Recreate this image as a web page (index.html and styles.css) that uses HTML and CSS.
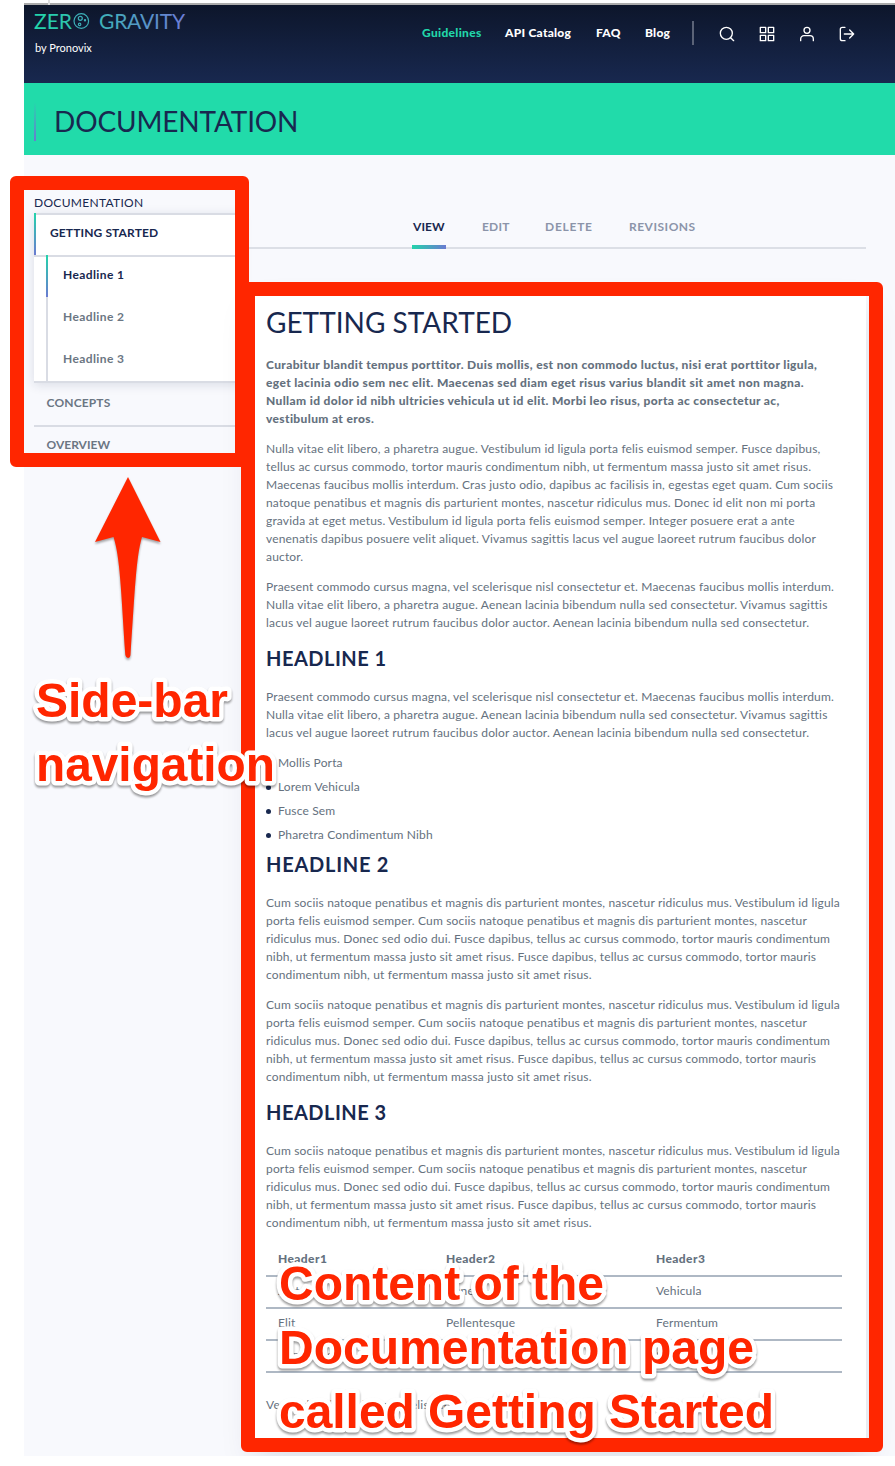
FILE: index.html
```html
<!DOCTYPE html>
<html lang="en">
<head>
<meta charset="utf-8">
<title>Documentation</title>
<link rel="stylesheet" href="styles.css">
</head>
<body>
<div class="tick"></div>
<div class="page">
  <header class="topbar">
    <div class="brand">
      <svg class="logo" width="160" height="22" viewBox="0 0 160 22">
        <defs><linearGradient id="brand" gradientUnits="userSpaceOnUse" x1="0" y1="0" x2="152" y2="0"><stop offset="0" stop-color="#21d6aa"/><stop offset=".3" stop-color="#33bfb0"/><stop offset="1" stop-color="#6e7bd8"/></linearGradient></defs>
        <g fill="url(#brand)" class="logo-text">
          <text x="0" y="17" textLength="38">ZER</text>
          <text x="65" y="17" textLength="86">GRAVITY</text>
        </g>
        <g fill="none" stroke="#3db0b8" stroke-width="1.2"><circle cx="47.3" cy="9" r="7.3"/><circle cx="46.3" cy="6.300" r="2"/><circle cx="45.6" cy="12.4" r="1.2"/><circle cx="51" cy="8.200" r=".6"/></g>
      </svg>
      <div class="by">by Pronovix</div>
    </div>
    <nav class="menu">
      <a class="active guide">Guidelines</a><a class="api">API Catalog</a><a class="faq">FAQ</a><a class="blog">Blog</a>
    </nav>
    <div class="divider"></div>
    <div class="icons">
      <svg viewBox="0 0 24 24"><circle cx="11" cy="11" r="9"/><path d="M17.5 17.5 22 22"/></svg>
      <svg viewBox="0 0 24 24"><path d="M2 2h8v8H2zM14 2h8v8h-8zM2 14h8v8H2zM14 14h8v8h-8z"/></svg>
      <svg viewBox="0 0 24 24"><circle cx="12" cy="6.5" r="4.5"/><path d="M2.5 22v-2.500a5 5 0 0 1 5-5h9a5 5 0 0 1 5 5V22"/></svg>
      <svg viewBox="0 0 24 24"><path d="M9 2H5a3 3 0 0 0-3 3v14a3 3 0 0 0 3 3h4M8 12h14M16 6l6 6-6 6"/></svg>
    </div>
  </header>
  <div class="banner"><h1>DOCUMENTATION</h1></div>
  <div class="body">
    <aside class="sidebar">
      <div class="side-title">DOCUMENTATION</div>
      <div class="open">
        <div class="current"><span>GETTING STARTED</span></div>
        <div class="subs">
          <div class="sub on">Headline 1</div>
          <div class="sub">Headline 2</div>
          <div class="sub">Headline 3</div>
        </div>
      </div>
      <div class="item"><span>CONCEPTS</span></div>
      <div class="item last"><span>OVERVIEW</span></div>
    </aside>
    <main class="main">
      <nav class="tabs"><a class="sel">VIEW</a><a class="t-edit">EDIT</a><a class="t-delete">DELETE</a><a class="t-rev">REVISIONS</a></nav>
      <article class="panel">
        <h2>GETTING STARTED</h2>
        <p class="lead">Curabitur blandit tempus porttitor. Duis mollis, est non commodo luctus, nisi erat porttitor ligula,<br>eget lacinia odio sem nec elit. Maecenas sed diam eget risus varius blandit sit amet non magna.<br>Nullam id dolor id nibh ultricies vehicula ut id elit. Morbi leo risus, porta ac consectetur ac,<br>vestibulum at eros.</p>
        <p>Nulla vitae elit libero, a pharetra augue. Vestibulum id ligula porta felis euismod semper. Fusce dapibus,<br>tellus ac cursus commodo, tortor mauris condimentum nibh, ut fermentum massa justo sit amet risus.<br>Maecenas faucibus mollis interdum. Cras justo odio, dapibus ac facilisis in, egestas eget quam. Cum sociis<br>natoque penatibus et magnis dis parturient montes, nascetur ridiculus mus. Donec id elit non mi porta<br>gravida at eget metus. Vestibulum id ligula porta felis euismod semper. Integer posuere erat a ante<br>venenatis dapibus posuere velit aliquet. Vivamus sagittis lacus vel augue laoreet rutrum faucibus dolor<br>auctor.</p>
        <p>Praesent commodo cursus magna, vel scelerisque nisl consectetur et. Maecenas faucibus mollis interdum.<br>Nulla vitae elit libero, a pharetra augue. Aenean lacinia bibendum nulla sed consectetur. Vivamus sagittis<br>lacus vel augue laoreet rutrum faucibus dolor auctor. Aenean lacinia bibendum nulla sed consectetur.</p>
        <h3>HEADLINE 1</h3>
        <p>Praesent commodo cursus magna, vel scelerisque nisl consectetur et. Maecenas faucibus mollis interdum.<br>Nulla vitae elit libero, a pharetra augue. Aenean lacinia bibendum nulla sed consectetur. Vivamus sagittis<br>lacus vel augue laoreet rutrum faucibus dolor auctor. Aenean lacinia bibendum nulla sed consectetur.</p>
        <ul><li>Mollis Porta</li><li>Lorem Vehicula</li><li>Fusce Sem</li><li>Pharetra Condimentum Nibh</li></ul>
        <h3>HEADLINE 2</h3>
        <p class="wide">Cum sociis natoque penatibus et magnis dis parturient montes, nascetur ridiculus mus. Vestibulum id ligula<br>porta felis euismod semper. Cum sociis natoque penatibus et magnis dis parturient montes, nascetur<br>ridiculus mus. Donec sed odio dui. Fusce dapibus, tellus ac cursus commodo, tortor mauris condimentum<br>nibh, ut fermentum massa justo sit amet risus. Fusce dapibus, tellus ac cursus commodo, tortor mauris<br>condimentum nibh, ut fermentum massa justo sit amet risus.</p>
        <p class="wide">Cum sociis natoque penatibus et magnis dis parturient montes, nascetur ridiculus mus. Vestibulum id ligula<br>porta felis euismod semper. Cum sociis natoque penatibus et magnis dis parturient montes, nascetur<br>ridiculus mus. Donec sed odio dui. Fusce dapibus, tellus ac cursus commodo, tortor mauris condimentum<br>nibh, ut fermentum massa justo sit amet risus. Fusce dapibus, tellus ac cursus commodo, tortor mauris<br>condimentum nibh, ut fermentum massa justo sit amet risus.</p>
        <h3>HEADLINE 3</h3>
        <p class="wide">Cum sociis natoque penatibus et magnis dis parturient montes, nascetur ridiculus mus. Vestibulum id ligula<br>porta felis euismod semper. Cum sociis natoque penatibus et magnis dis parturient montes, nascetur<br>ridiculus mus. Donec sed odio dui. Fusce dapibus, tellus ac cursus commodo, tortor mauris condimentum<br>nibh, ut fermentum massa justo sit amet risus. Fusce dapibus, tellus ac cursus commodo, tortor mauris<br>condimentum nibh, ut fermentum massa justo sit amet risus.</p>
        <div class="table">
          <div class="row head"><span>Header1</span><span>Header2</span><span>Header3</span></div>
          <div class="row"><span>Justo</span><span>Aenean</span><span>Vehicula</span></div>
          <div class="row"><span>Elit</span><span>Pellentesque</span><span>Fermentum</span></div>
          <div class="row"><span>Commodo</span><span>Tortor</span><span>Ornare</span></div>
        </div>
        <p class="tail">Vestibulum id ligula porta felis sem</p>
      </article>
    </main>
  </div>
</div>
<div class="frame frame-side"></div>
<div class="frame frame-content"></div>
<svg class="notes" width="895" height="1466" viewBox="0 0 895 1466">
  <g class="arrow"><path d="M128 477 160.500 542 142 537C136 557 135 590 130.500 655Q130 658 128 658T125.300 655C121 590 120 557 113.500 537L95 542Z"/></g>
  <g class="note">
    <text x="36" y="716.5" textLength="192" lengthAdjust="spacingAndGlyphs">Side-bar</text>
    <text x="36" y="780.5" textLength="239" lengthAdjust="spacingAndGlyphs">navigation</text>
    <text x="279" y="1299.5" textLength="325" lengthAdjust="spacingAndGlyphs">Content of the</text>
    <text x="279" y="1363.500" textLength="475" lengthAdjust="spacingAndGlyphs">Documentation page</text>
    <text x="279" y="1427.500" textLength="495" lengthAdjust="spacingAndGlyphs">called Getting Started</text>
  </g>
</svg>
</body>
</html>
```
FILE: styles.css
```css
* { box-sizing: border-box; }
body { margin: 0; background: #fff; width: 895px; height: 1466px; position: relative; overflow: hidden; font: 12px/18px Lato, sans-serif; color: #65717e; }
h1, h2, h3, p, ul { margin: 0; padding: 0; font-weight: 400; }
.tick { position: absolute; left: 48px; top: 0; width: 2px; height: 5px; background: #ddd; }
.page { margin: 3px 0 0 24px; height: 1453px; border-top: 2px solid #ababab; background: #f8f9fd; overflow: hidden; display: flex; flex-direction: column; }
.topbar { height: 78px; flex: none; background: linear-gradient(#0d162b, #18284f); display: flex; color: #fff; }
.brand { padding: 7px 0 0 10px; width: 398px; }
.logo { display: block; overflow: visible; }
.logo-text { font: 21px Lato, sans-serif; }
.by { padding-left: 1px; margin-top: 5px; height: 18px; line-height: 18px; font-size: 11px; }
.menu { display: flex; height: 24px; margin-top: 16px; width: 270px; font-weight: 900; font-size: 12px; line-height: 24px; letter-spacing: .25px; white-space: nowrap; }
.menu .active { color: #21d6aa; letter-spacing: .3px; }
.guide { width: 83px; }
.api { width: 91px; }
.faq { width: 49px; }
.divider { width: 2px; height: 24px; margin-top: 16px; background: #5b6377; }
.icons { display: flex; gap: 24px; padding: 21px 0 0 25px; }
.icons svg { width: 16px; height: 16px; fill: none; stroke: #fff; stroke-width: 2; stroke-linecap: round; stroke-linejoin: round; }
.banner { height: 72px; flex: none; background: #21dbaa; padding: 20px 0 0 10px; }
.banner h1 { height: 38px; padding-left: 18px; border-left: 2px solid; border-image: linear-gradient(#21dbaa, #6c78d2) 1; font-size: 28px; line-height: 37px; letter-spacing: -.15px; color: #18284f; }
.body { flex: 1; display: flex; padding-left: 10px; }
.sidebar { width: 208px; padding-top: 39px; color: #6b7683; letter-spacing: .12px; }
.side-title { height: 19px; line-height: 18px; color: #18284f; letter-spacing: .3px; }
.open { height: 170px; background: #fff; border-top: 2px solid #d9dce4; border-bottom: 2px solid #d9dce4; box-shadow: 0 2px 10px rgba(24,40,79,.13); }
.current { height: 42px; margin-top: -2px; border-left: 2px solid; border-image: linear-gradient(#21d6aa, #6c78d2) 1; padding: 11px 14px; font-weight: 700; color: #18284f; }
.subs { border-top: 2px solid #d9dce4; padding-left: 12px; height: 126px; }
.sub { height: 42px; line-height: 40px; border-left: 2px solid #d9dce4; padding-left: 15px; font-weight: 700; letter-spacing: .4px; }
.sub.on { color: #18284f; margin-top: -2px; border-image: linear-gradient(#21d6aa, #6c78d2) 1; }
.item { height: 44px; border-bottom: 2px solid #d9dce4; padding: 11px 12.5px; font-weight: 700; letter-spacing: .15px; }
.item.last { border: 0; padding-top: 9px; letter-spacing: 0; }
.main { width: 624px; }
.tabs { height: 94px; padding: 60px 0 0 170px; border-bottom: 2px solid #dcdfe6; display: flex; font-weight: 700; color: #8b94a9; line-height: 24px; letter-spacing: .5px; white-space: nowrap; }
.tabs .sel { color: #18284f; width: 34px; height: 34px; padding-left: 1px; margin-right: 36px; border-bottom: 4px solid; border-image: linear-gradient(90deg, #21d6aa, #6c78d2) 1; letter-spacing: .1px; }
.t-edit { width: 63px; letter-spacing: .2px; }
.t-delete { width: 84px; letter-spacing: .75px; }
.panel { margin: 40px 0 0 12px; width: 612px; height: 1152px; background: #fff; padding: 15px 12px; box-shadow: 0 20px 32px rgba(24,40,79,.13); white-space: nowrap; }
.panel h2 { color: #18284f; font-size: 28px; line-height: 36px; height: 52px; }
.panel p { margin-bottom: 12px; letter-spacing: .165px; }
.panel .lead { font-weight: 900; letter-spacing: .355px; }
.panel h3 { margin: 14px 0 18px; height: 24px; line-height: 24px; font-size: 20px; letter-spacing: .5px; font-weight: 700; color: #18284f; }
.panel ul { list-style: none; margin-top: -3px; letter-spacing: .15px; }
.panel li { height: 24px; line-height: 24px; padding-left: 12px; display: flex; }
.panel li::before { content: ""; width: 5px; height: 5px; border-radius: 50%; background: #18284f; margin: 10px 7px 0 -12px; }
.panel ul + h3 { margin-top: 5px; letter-spacing: .75px; }
.row { display: grid; grid-template-columns: 168px 210px 198px; height: 32px; border-bottom: 2px solid #aeb8c4; line-height: 28px; padding-left: 12px; letter-spacing: .15px; }
.table { width: 576px; }
.row.head { height: 33px; line-height: 29px; font-weight: 900; letter-spacing: .4px; }
.panel .tail { margin-top: 23px; }
.frame { position: absolute; border: 14px solid #ff2600; border-radius: 6px; }
.frame-side { left: 10px; top: 176px; width: 239px; height: 291px; }
.frame-content { left: 241px; top: 282px; width: 642px; height: 1170px; }
.notes { position: absolute; left: 0; top: 0; fill: #ff2600; }
.note { font: bold 49px "Liberation Sans", sans-serif; stroke: #fff; stroke-width: 9px; stroke-linejoin: round; paint-order: stroke; filter: drop-shadow(0 2px 1px rgba(0,0,0,.4)); }
.arrow { filter: drop-shadow(0 2px 1px rgba(0,0,0,.35)); }
```
